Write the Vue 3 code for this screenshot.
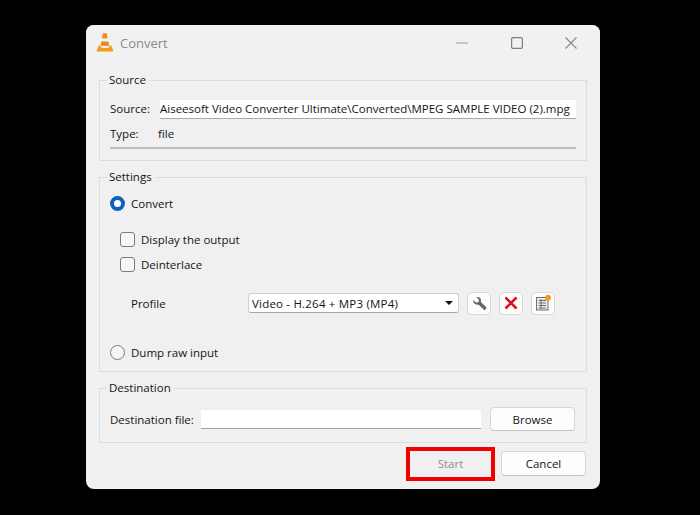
<script setup>
const profile = 'Video - H.264 + MP3 (MP4)'
</script>

<template>
  <div class="stage">
    <div class="window">
      <header class="titlebar">
        <svg class="logo" viewBox="0 0 18 20" width="18" height="20">
          <path d="M7 1.2h3.6l1 5.5H6z" fill="#f08a1d" />
          <path d="M6.2 6.400h5.400l.7 3.400H5.600z" fill="#f4f1ec" />
          <path d="M5.500 9.600h6.800l.9 4.200H4.700z" fill="#ee8219" />
          <path d="M4.700 13.400c1 1.200 7.600 1.200 8.600 0l.3 1.300H4.400z" fill="#e9e4db" />
          <path d="M2.800 13.400h2l-.5 1.800c1.800 1 7.600 1 9.400 0l-.5-1.800h2l2.100 5.400a.6.6 0 0 1-.5.8H1.200a.6.6 0 0 1-.5-.8z" fill="#f49a16" />
        </svg>
        <span class="title">Convert</span>
        <div class="controls">
          <svg viewBox="0 0 12 12" width="12" height="12"><path d="M0 6h12" stroke="#9a9a9a" stroke-width="1.200" /></svg>
          <svg viewBox="0 0 12 12" width="12" height="12"><rect x=".6" y=".6" width="10.800" height="10.800" rx="1.500" fill="none" stroke="#7d7d7d" stroke-width="1.200" /></svg>
          <svg viewBox="0 0 12 12" width="12" height="12"><path d="M.5.5l11 11M11.500.5l-11 11" stroke="#8a8a8a" stroke-width="1.100" /></svg>
        </div>
      </header>

      <div class="body">
        <fieldset class="group source">
          <legend>Source</legend>
          <div class="source-grid">
            <span>Source:</span>
            <div class="source-field">Aiseesoft Video Converter Ultimate\Converted\MPEG SAMPLE VIDEO (2).mpg</div>
            <span>Type:</span>
            <div class="type-value">file</div>
          </div>
        </fieldset>

        <fieldset class="group settings">
          <legend>Settings</legend>
          <label class="radio-row"><span class="radio on"></span>Convert</label>
          <div class="checks">
            <label class="check-row"><span class="check"></span>Display the output</label>
            <label class="check-row"><span class="check"></span>Deinterlace</label>
          </div>
          <div class="profile-row">
            <span class="profile-label">Profile</span>
            <div class="select">
              <span class="select-text">{{ profile }}</span>
              <svg viewBox="0 0 8 4" width="8" height="4"><path d="M0 0h8L4 4z" fill="#111" /></svg>
            </div>
            <button class="icon-btn" type="button">
              <svg viewBox="0 0 16 16" width="15" height="15"><path d="M15 11.800l-5.600-5.500c.6-1.900.1-3.500-1.100-4.500C7.300 1 6 .8 4.700 1.200L7.400 4 7 6.500l-2.600.6-2.800-2.800c-.4 1.400-.1 2.800.9 3.800 1.100 1.100 2.700 1.500 4.400 1l5.700 5.600c.4.400 1 .4 1.300 0l1.100-1.100c.3-.4.300-1.400 0-1.800z" fill="#666" /></svg>
            </button>
            <button class="icon-btn" type="button">
              <svg viewBox="0 0 14 14" width="14" height="14"><path d="M1.500 1.500l11 11M12.500 1.500l-11 11" stroke="#dc0f1c" stroke-width="2.600" /></svg>
            </button>
            <button class="icon-btn" type="button">
              <svg viewBox="0 0 18 18" width="18" height="18">
                <rect x="2.500" y="3.500" width="11.500" height="12.500" fill="#ececec" stroke="#6e6e6e" />
                <path d="M4.500 6.500h7.500M4.500 9h7.500M4.500 11.500h7.500M4.500 14h7.500M7 5v10" stroke="#707070" stroke-width="1" />
                <circle cx="14" cy="3.800" r="3" fill="#f59a23" />
              </svg>
            </button>
          </div>
          <label class="radio-row dump"><span class="radio"></span>Dump raw input</label>
        </fieldset>

        <fieldset class="group destination">
          <legend>Destination</legend>
          <div class="dest-row">
            <span class="dest-label">Destination file:</span>
            <div class="dest-field"></div>
            <button class="btn browse" type="button">Browse</button>
          </div>
        </fieldset>

        <footer class="actions">
          <div class="highlight"><button class="btn start" type="button" disabled>Start</button></div>
          <button class="btn cancel" type="button">Cancel</button>
        </footer>
      </div>
    </div>
  </div>
</template>

<style>
html, body { margin: 0; background: #000; }
</style>

<style scoped>
.stage {
  width: 700px;
  height: 515px;
  background: #000;
  padding: 25px 0 0 86px;
  box-sizing: border-box;
  font-family: "Open Sans", "Noto Sans", sans-serif;
  font-size: 11.5px;
  color: #141414;
}
.window {
  width: 514px;
  height: 464px;
  background: #f0f0f0;
  border-radius: 8px;
  box-sizing: border-box;
  overflow: hidden;
}
.titlebar {
  height: 36px;
  display: flex;
  align-items: center;
  padding-left: 10px;
  background: #f1f1f1;
}
.logo { margin-top: -2px; }
.title { margin-left: 6px; font-size: 13px; color: #8b8b8b; }
.controls {
  margin-left: auto;
  width: 121px;
  display: flex;
  justify-content: space-between;
  align-items: center;
  padding-right: 23px;
}
.body { padding: 0 13px; }
.group {
  margin: 0;
  padding: 0 10px;
  border: 1px solid #dcdcdc;
  min-width: 0;
  box-sizing: border-box;
}
.group legend {
  padding: 0 3px 0 2px;
  margin-left: -3px;
  font-size: 11.5px;
  line-height: 18px;
}
.source { height: 90px; margin-top: 10px; }
.source-grid {
  display: grid;
  grid-template-columns: 50px 416px;
  row-gap: 6px;
  padding-top: 11px;
  line-height: 18px;
}
.source-field {
  height: 18px;
  background: #fff;
  border-bottom: 1.500px solid #a9a9a9;
  white-space: nowrap;
  overflow: hidden;
}
.source-grid span { display: block; }
.type-value { margin-left: -2px; }
.source-grid::after {
  content: "";
  grid-column: 1 / 3;
  height: 1.500px;
  margin-top: -2px;
  background: #bdbdbd;
  width: 466px;
}
.settings { height: 204px; margin-top: 7px; padding-left: 10px; }
.radio-row { display: flex; align-items: center; gap: 6px; height: 18px; }
.radio {
  width: 15px;
  height: 15px;
  border-radius: 50%;
  border: 1px solid #7a7a7a;
  box-sizing: border-box;
  background: #f6f6f6;
}
.radio.on { border: 4.500px solid #0b61bd; background: #fff; }
.settings > .radio-row:first-of-type { margin-top: 8px; }
.checks { margin-top: 18px; padding-left: 10px; display: flex; flex-direction: column; gap: 7px; }
.check-row { display: flex; align-items: center; gap: 6px; height: 18px; }
.check {
  width: 15px;
  height: 15px;
  border-radius: 3px;
  border: 1px solid #7a7a7a;
  box-sizing: border-box;
  background: #f6f6f6;
}
.profile-row {
  display: flex;
  align-items: center;
  margin-top: 18px;
  padding-left: 21px;
  height: 24px;
}
.profile-label { width: 117px; }
.select {
  width: 211px;
  height: 20px;
  box-sizing: border-box;
  background: #fff;
  border: 1px solid #d0d0d0;
  border-bottom-color: #a8a8a8;
  border-radius: 3px;
  display: flex;
  align-items: center;
  justify-content: space-between;
  padding: 0 5px 0 3px;
  margin-right: 8px;
}
.select-text { letter-spacing: 0.2px; }
.icon-btn {
  width: 24px;
  height: 23px;
  padding: 0;
  margin-right: 8px;
  background: #fcfcfc;
  border: 1px solid #d8d8d8;
  border-radius: 4px;
  display: flex;
  align-items: center;
  justify-content: center;
}
.dump { margin-top: 28px; }
.destination { height: 64px; margin-top: 7px; }
.dest-row { display: flex; align-items: center; padding-top: 10px; }
.dest-label { width: 91px; }
.dest-field {
  width: 280px;
  height: 19px;
  box-sizing: border-box;
  background: #fff;
  border-bottom: 1.500px solid #a3a3a3;
  margin-right: 9px;
}
.btn {
  font: inherit;
  color: #141414;
  background: #fdfdfd;
  border: 1px solid #d6d6d6;
  border-bottom-color: #c4c4c4;
  border-radius: 4px;
  padding: 0;
  box-sizing: border-box;
}
.browse { width: 85px; height: 24px; }
.actions {
  display: flex;
  justify-content: flex-end;
  align-items: center;
  height: 33px;
  margin-top: 4px;
  padding-right: 1px;
  gap: 6px;
}
.highlight {
  border: 4px solid #f00000;
  width: 89px;
  height: 34px;
  box-sizing: border-box;
  flex: none;
}
.start {
  width: 100%;
  height: 100%;
  background: #f0f0f0;
  border: none;
  color: #8f8f8f;
}
.cancel { width: 85px; height: 25px; }
</style>
